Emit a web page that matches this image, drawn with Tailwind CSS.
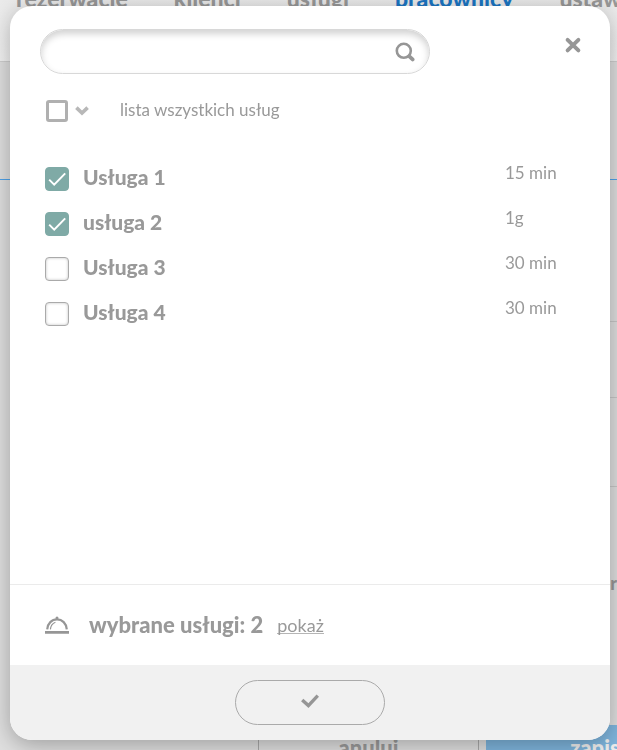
<!DOCTYPE html>
<html lang="pl">
<head>
    <meta charset="UTF-8">
    <meta name="viewport" content="width=device-width, initial-scale=1.0">
    <title>Pracownicy - usługi</title>
    <script src="https://cdn.jsdelivr.net/npm/@tailwindcss/browser@4"></script>
</head>
<body class="h-screen overflow-hidden bg-[#e0e0e0] font-['Lato','Open_Sans',sans-serif] text-[#999]">
    <!-- Page under the dialog -->
    <div class="flex h-screen flex-col overflow-hidden">
        <header class="h-[62px] shrink-0 border-b border-[#d0d0d0] bg-linear-to-b from-[#ebebeb] to-[#f4f4f4]">
            <nav class="-mt-4 flex gap-[46px] pl-4 text-[23px] leading-7 font-black whitespace-nowrap text-[#999]">
                <a href="#">rezerwacje</a>
                <a href="#">klienci</a>
                <a href="#">usługi</a>
                <a href="#" class="text-[#1b76c4]">pracownicy</a>
                <a href="#">ustawienia</a>
            </nav>
        </header>
        <main class="flex grow flex-col">
            <div class="h-[118px] border-b border-[#4fa3ea]"></div>
            <div class="ml-10 h-[142px] border-b border-[#c8c8c8]"></div>
            <div class="ml-10 h-[76px] border-b border-[#c8c8c8]"></div>
            <div class="ml-10 h-[89px] border-b border-[#c8c8c8]"></div>
            <div class="mt-[82px] self-end text-lg leading-7 font-black">kolor</div>
            <div class="mt-auto flex h-[25px] items-start gap-[7px] overflow-hidden pl-[258px] text-[22px] leading-[40px] font-black">
                <button type="button" class="h-[46px] w-[221px] shrink-0 rounded-md border border-[#aaa] text-[#9c9c9c]">anuluj</button>
                <button type="button" class="h-[46px] w-[228px] shrink-0 bg-[#7fb6de] text-[#f0f0f0]">zapisz</button>
            </div>
        </main>
    </div>

    <!-- Dialog -->
    <div class="fixed inset-0 pt-[6px] pr-[7px] pb-[10px] pl-[10px]">
        <div role="dialog" aria-label="usługi" class="flex h-full flex-col overflow-hidden rounded-[22px] bg-white shadow-[0_5px_25px_rgba(0,0,0,0.3)]">
            <div class="flex items-start justify-between pt-[23px] pr-7 pl-[30px]">
                <label class="flex h-[45px] w-[390px] items-center rounded-full border border-[#d8d8d8] pr-[14px] pl-5 shadow-[inset_0_4px_7px_rgba(0,0,0,0.18)]">
                    <input type="search" aria-label="szukaj" class="min-w-0 grow bg-transparent text-lg outline-none">
                    <svg class="size-5" viewBox="0 0 20 20" fill="none" stroke="#969696" stroke-linecap="round">
                        <circle cx="8.8" cy="8.8" r="7" stroke-width="2.6"/>
                        <path d="M14.6 14.6L17.6 17.4" stroke-width="3.8"/>
                    </svg>
                </label>
                <button type="button" aria-label="zamknij" class="mt-[7px]">
                    <svg class="size-[18px]" viewBox="0 0 18 18" stroke="#969696" stroke-width="3.9" stroke-linecap="round">
                        <path d="M3.6 3.8L14.4 14.4M14.4 3.8L3.6 14.4"/>
                    </svg>
                </button>
            </div>

            <div class="flex items-center pt-[22px] pl-9 text-[17px] leading-7">
                <input type="checkbox" id="all" aria-label="zaznacz wszystkie" class="size-[22px] appearance-none rounded-[3px] border-3 border-[#b0b0b0]">
                <button type="button" aria-label="rozwiń" class="ml-[7px]">
                    <svg class="h-[10px] w-[14px]" viewBox="0 0 14 10" fill="none" stroke="#b8b8b8" stroke-width="3.6">
                        <path d="M1.4 1.6L7 7L12.6 1.6"/>
                    </svg>
                </button>
                <label for="all" class="ml-[31px] pb-[2px]">lista wszystkich usług</label>
            </div>

            <ul class="grow pt-[37px] pr-7 pl-[35px]">
                <li class="flex h-[45px] items-start">
                    <span class="relative mt-1 size-6">
                        <input type="checkbox" id="s1" checked class="peer block size-6 appearance-none rounded border border-[#aaa] shadow-[inset_0_0_3px_rgba(0,0,0,0.25)] checked:border-[#7faaa6] checked:bg-[#7faaa6] checked:shadow-none">
                        <svg class="pointer-events-none absolute inset-0 hidden size-6 peer-checked:block" viewBox="0 0 24 24" fill="none" stroke="#fff" stroke-width="2"><path d="M4.2 12.6L9.2 17.6L20.2 6.4"/></svg>
                    </span>
                    <label for="s1" class="ml-[14px] grow text-[21px] leading-7 font-black">Usługa 1</label>
                    <span class="w-[77px] text-[17px] leading-5">15 min</span>
                </li>
                <li class="flex h-[45px] items-start">
                    <span class="relative mt-1 size-6">
                        <input type="checkbox" id="s2" checked class="peer block size-6 appearance-none rounded border border-[#aaa] shadow-[inset_0_0_3px_rgba(0,0,0,0.25)] checked:border-[#7faaa6] checked:bg-[#7faaa6] checked:shadow-none">
                        <svg class="pointer-events-none absolute inset-0 hidden size-6 peer-checked:block" viewBox="0 0 24 24" fill="none" stroke="#fff" stroke-width="2"><path d="M4.2 12.6L9.2 17.6L20.2 6.4"/></svg>
                    </span>
                    <label for="s2" class="ml-[14px] grow text-[21px] leading-7 font-black">usługa 2</label>
                    <span class="w-[77px] text-[17px] leading-5">1g</span>
                </li>
                <li class="flex h-[45px] items-start">
                    <span class="relative mt-1 size-6">
                        <input type="checkbox" id="s3" class="peer block size-6 appearance-none rounded border border-[#aaa] shadow-[inset_0_0_3px_rgba(0,0,0,0.25)] checked:border-[#7faaa6] checked:bg-[#7faaa6] checked:shadow-none">
                        <svg class="pointer-events-none absolute inset-0 hidden size-6 peer-checked:block" viewBox="0 0 24 24" fill="none" stroke="#fff" stroke-width="2"><path d="M4.2 12.6L9.2 17.6L20.2 6.4"/></svg>
                    </span>
                    <label for="s3" class="ml-[14px] grow text-[21px] leading-7 font-black">Usługa 3</label>
                    <span class="w-[77px] text-[17px] leading-5">30 min</span>
                </li>
                <li class="flex h-[45px] items-start">
                    <span class="relative mt-1 size-6">
                        <input type="checkbox" id="s4" class="peer block size-6 appearance-none rounded border border-[#aaa] shadow-[inset_0_0_3px_rgba(0,0,0,0.25)] checked:border-[#7faaa6] checked:bg-[#7faaa6] checked:shadow-none">
                        <svg class="pointer-events-none absolute inset-0 hidden size-6 peer-checked:block" viewBox="0 0 24 24" fill="none" stroke="#fff" stroke-width="2"><path d="M4.2 12.6L9.2 17.6L20.2 6.4"/></svg>
                    </span>
                    <label for="s4" class="ml-[14px] grow text-[21px] leading-7 font-black">Usługa 4</label>
                    <span class="w-[77px] text-[17px] leading-5">30 min</span>
                </li>
            </ul>

            <div class="flex h-[81px] shrink-0 items-center border-t border-[#ebebeb] pl-[35px]">
                <svg class="h-[18px] w-6" viewBox="0 0 24 18" fill="none" stroke="#969696">
                    <path d="M0 16.4H24" stroke-width="2.6"/>
                    <path d="M2.2 13.4C2.6 7.4 6.8 3.4 12 3.4S21.4 7.4 21.8 13.4" stroke-width="2.2"/>
                    <path d="M5.4 13.4C5.8 9.2 7.8 7.2 10.4 6.2" stroke-width="1.2"/>
                    <circle cx="12" cy="1.9" r="1.5" fill="#969696" stroke="none"/>
                </svg>
                <span class="ml-5 text-[22px] leading-7 font-black">wybrane usługi: 2</span>
                <a href="#" class="ml-[14px] border-b border-[#b5b5b5] text-lg leading-4">pokaż</a>
            </div>

            <div class="flex h-[75px] shrink-0 items-center justify-center bg-[#f1f1f1]">
                <button type="button" aria-label="zatwierdź" class="flex h-[45px] w-[150px] items-center justify-center rounded-full border border-[#aaa] pb-1">
                    <svg class="h-[14px] w-[18px]" viewBox="0 0 18 14" fill="none" stroke="#969696" stroke-width="3.4">
                        <path d="M1.2 6L7.4 11.6L16.8 1.6"/>
                    </svg>
                </button>
            </div>
        </div>
    </div>
</body>
</html>
